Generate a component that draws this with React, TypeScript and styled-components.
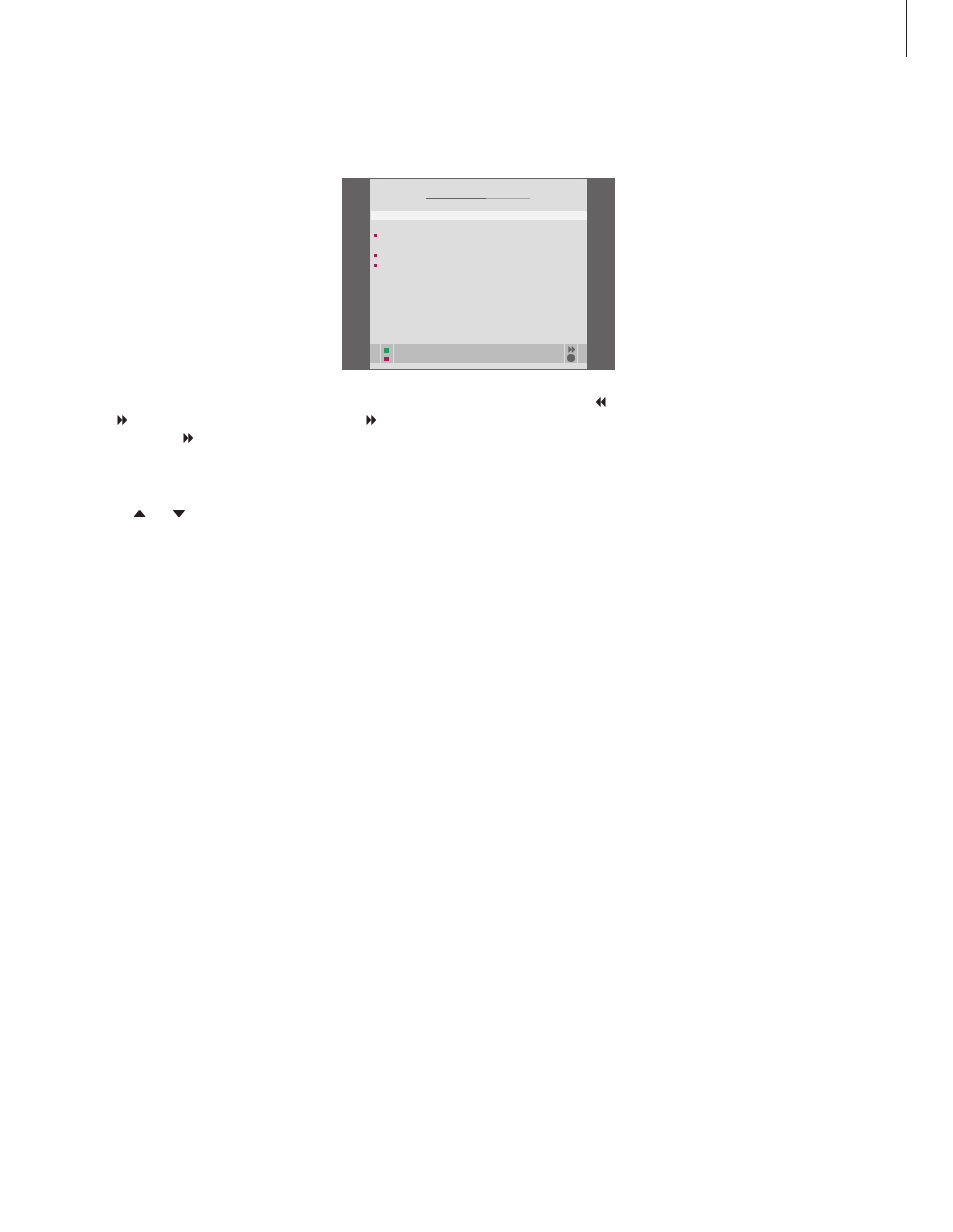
import React from "react";
import styled, { createGlobalStyle } from "styled-components";

const color = {
  ink: "#231f20",
  frame: "#656263",
  screen: "#dddddd",
  highlight: "#f3f3f3",
  bar: "#bcbcbc",
  track: "#a5a4a4",
  red: "#a31f54",
  green: "#27965f",
};

const GlobalStyle = createGlobalStyle`
  * { box-sizing: border-box; }
  body {
    margin: 0;
    background: #ffffff;
    font-family: "Liberation Sans", Arial, sans-serif;
  }
`;

const Page = styled.main`
  min-height: 100vh;
  padding: 0 46px 0 117px;
`;

const Header = styled.header`
  display: flex;
  justify-content: flex-end;
  height: 178px;
`;

const MarginRule = styled.div`
  width: 1px;
  height: 57px;
  background: ${color.ink};
`;

const Television = styled.section`
  width: 273px;
  margin-left: 225px;
  padding: 1px 28px;
  background: ${color.frame};
`;

const Screen = styled.div`
  display: flex;
  flex-direction: column;
  height: 190px;
  padding-bottom: 6px;
  background: ${color.screen};
`;

const TitleArea = styled.div`
  height: 32px;
  padding: 19px 57px 0 56px;
`;

const TitleRule = styled.div`
  display: flex;
  height: 1px;
`;

const RulePart = styled.span<{ $grow: number; $color: string }>`
  flex: ${(p) => p.$grow};
  background: ${(p) => p.$color};
`;

const SelectedRow = styled.div`
  height: 9px;
  margin-left: 1px;
  background: ${color.highlight};
`;

const Timers = styled.ul`
  flex: 1;
  margin: 0;
  padding: 10px 4px 0;
  list-style: none;
`;

const Timer = styled.li<{ $marked?: boolean }>`
  display: flex;
  align-items: center;
  height: 10px;

  &::before {
    content: "";
    width: 3px;
    height: 3px;
    background: ${(p) => (p.$marked ? color.red : "transparent")};
  }
`;

const ControlBar = styled.footer`
  display: grid;
  grid-template-columns: 10px 12px 1fr 12px 9px;
  column-gap: 1px;
  height: 19px;
`;

const ControlCell = styled.div`
  display: flex;
  flex-direction: column;
  align-items: center;
  background: ${color.bar};
`;

const KeyCell = styled(ControlCell)`
  align-items: flex-start;
  gap: 4px;
  padding: 4px 3px 2px;
`;

const Key = styled.span<{ $color: string; $height: number }>`
  width: 5px;
  height: ${(p) => p.$height}px;
  background: ${(p) => p.$color};
`;

const GoCell = styled(ControlCell)`
  gap: 1px;
  padding-top: 2px;
`;

const Glyph = styled.svg`
  display: block;
  flex: none;
`;

const Instructions = styled.section`
  padding-top: 23px;
`;

const Line = styled.div<{ $indent?: number }>`
  display: flex;
  align-items: center;
  height: 18px;
  padding-left: ${(p) => p.$indent ?? 0}px;
`;

const SpacedLine = styled(Line)<{ $gap: number; $before?: number }>`
  gap: ${(p) => p.$gap}px;
  margin-top: ${(p) => p.$before ?? 0}px;
`;

function FastForward({ size = 10, fill = color.ink }: { size?: number; fill?: string }) {
  return (
    <Glyph width={size} height={size} viewBox="0 0 10 10" fill={fill} aria-label="Forward">
      <path d="M.5.3H1L4.9 4.4v1.2L1 9.7H.5zM5.3.3h.5L9.9 4.4v1.2L5.8 9.7h-.5z" />
    </Glyph>
  );
}

function Rewind() {
  return (
    <Glyph width={10} height={10} viewBox="0 0 10 10" fill={color.ink} aria-label="Rewind">
      <path d="M9.5.3H9L5.1 4.4v1.2L9 9.7h.5zM4.7.3h-.5L.1 4.4v1.2L4.2 9.7h.5z" />
    </Glyph>
  );
}

function Arrow({ down = false }: { down?: boolean }) {
  return (
    <Glyph width={12} height={7} viewBox="0 0 12 7" fill={color.ink} aria-label={down ? "Down" : "Up"}>
      <path d={down ? "M.2 0h11.6v.7L6.7 7H5.3L.2.7z" : "M0 7h11.2v-.7L6.3.2H4.9L0 6.3z"} />
    </Glyph>
  );
}

export default function App() {
  return (
    <>
      <GlobalStyle />
      <Page>
        <Header>
          <MarginRule />
        </Header>
        <Television>
          <Screen>
            <TitleArea>
              <TitleRule>
                <RulePart $grow={60} $color={color.frame} />
                <RulePart $grow={44} $color={color.track} />
              </TitleRule>
            </TitleArea>
            <SelectedRow />
            <Timers>
              <Timer $marked />
              <Timer />
              <Timer $marked />
              <Timer $marked />
            </Timers>
            <ControlBar>
              <ControlCell />
              <KeyCell>
                <Key $color={color.green} $height={5} />
                <Key $color={color.red} $height={4} />
              </KeyCell>
              <ControlCell />
              <GoCell>
                <FastForward size={7} fill={color.frame} />
                <Glyph width={8} height={8} viewBox="0 0 8 8" fill={color.frame}>
                  <circle cx="4" cy="4" r="4" />
                </Glyph>
              </GoCell>
              <ControlCell />
            </ControlBar>
          </Screen>
        </Television>
        <Instructions>
          <Line $indent={479}>
            <Rewind />
          </Line>
          <SpacedLine $gap={239}>
            <FastForward />
            <FastForward />
          </SpacedLine>
          <Line $indent={66}>
            <FastForward />
          </Line>
          <SpacedLine $indent={17} $gap={27} $before={57}>
            <Arrow />
            <Arrow down />
          </SpacedLine>
        </Instructions>
      </Page>
    </>
  );
}
